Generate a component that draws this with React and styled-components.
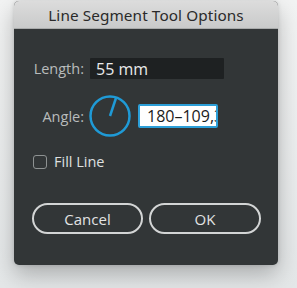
import React from "react";
import styled, { createGlobalStyle } from "styled-components";

const Global = createGlobalStyle`
  html, body { margin: 0; padding: 0; background: #e9ebec; }
  body { font-family: "Open Sans", "Noto Sans", sans-serif; width: 297px; height: 288px; overflow: hidden; }
`;

const Page = styled.div`
  width: 297px;
  height: 288px;
  padding: 1px 0 0 14px;
  box-sizing: border-box;
  background: linear-gradient(#f2f3f3, #e4e7e8);
`;

const Dialog = styled.div`
  width: 264px;
  height: 264px;
  border-radius: 5px;
  overflow: hidden;
  display: flex;
  flex-direction: column;
  background: #323637;
  box-shadow: 0 10px 22px rgba(0, 0, 0, 0.25), 0 0 4px rgba(0, 0, 0, 0.15);
`;

const TitleBar = styled.div`
  height: 27px;
  flex: none;
  display: flex;
  align-items: center;
  justify-content: center;
  background: linear-gradient(#dcdcdc, #c9caca);
  border-bottom: 1px solid #a9abab;
  color: #2a2a2a;
  font-family: "Noto Sans", sans-serif;
  font-size: 15.3px;
  letter-spacing: 0.1px;
`;

const Body = styled.div`
  padding: 29px 0 0 19px;
  display: flex;
  flex-direction: column;
`;

const Row = styled.div`
  display: flex;
  align-items: center;
  gap: ${(p) => p.$gap || 6}px;
  margin-top: ${(p) => p.$top || 0}px;
`;

const Label = styled.span`
  width: 51px;
  text-align: right;
  color: #b9bcbc;
  font-size: 14.5px;
  white-space: nowrap;
`;

const TextField = styled.div`
  width: ${(p) => p.$w}px;
  height: ${(p) => p.$h}px;
  box-sizing: border-box;
  display: flex;
  align-items: center;
  overflow: hidden;
  white-space: nowrap;
  font-size: 16px;
  padding-left: ${(p) => (p.$focused ? 7 : 6)}px;
  background: ${(p) => (p.$focused ? "#ffffff" : "#1e2122")};
  color: ${(p) => (p.$focused ? "#1b1b1b" : "#e9eaea")};
  border: ${(p) => (p.$focused ? "2px solid #2c9fd8" : "none")};
  border-radius: ${(p) => (p.$focused ? 2 : 1)}px;
`;

const Dial = styled.svg`
  width: 42px;
  height: 42px;
  flex: none;
  margin-right: 2px;
`;

const CheckRow = styled.label`
  display: flex;
  align-items: center;
  gap: 7px;
  margin-top: 15px;
  color: #dfe0e0;
  font-size: 14.5px;
`;

const Box = styled.span`
  width: 14px;
  height: 14px;
  box-sizing: border-box;
  border: 1.5px solid #8e9292;
  border-radius: 3px;
`;

const Buttons = styled.div`
  display: flex;
  gap: 6px;
  margin-top: 32px;
  margin-left: -1px;
`;

const Button = styled.button`
  width: ${(p) => p.$w}px;
  height: 31px;
  border: 2px solid #d3d5d5;
  border-radius: 16px;
  background: transparent;
  color: #e2e3e3;
  font-family: "Open Sans", "Noto Sans", sans-serif;
  font-size: 15px;
  padding: 0;
`;

export default function App() {
  return (
    <>
      <Global />
      <Page>
        <Dialog>
          <TitleBar>Line Segment Tool Options</TitleBar>
          <Body>
            <Row>
              <Label>Length:</Label>
              <TextField $w={134} $h={21}>55 mm</TextField>
            </Row>
            <Row $top={16} $gap={5}>
              <Label>Angle:</Label>
              <Dial viewBox="0 0 42 42">
                <circle cx="21" cy="21" r="19.5" fill="none" stroke="#1f9ad6" strokeWidth="2.5" />
                <line x1="21" y1="21" x2="27" y2="3" stroke="#1f9ad6" strokeWidth="2.5" />
              </Dial>
              <TextField $w={80} $h={24} $focused>180–109,3</TextField>
            </Row>
            <CheckRow>
              <Box />
              Fill Line
            </CheckRow>
            <Buttons>
              <Button $w={111}>Cancel</Button>
              <Button $w={112}>OK</Button>
            </Buttons>
          </Body>
        </Dialog>
      </Page>
    </>
  );
}
